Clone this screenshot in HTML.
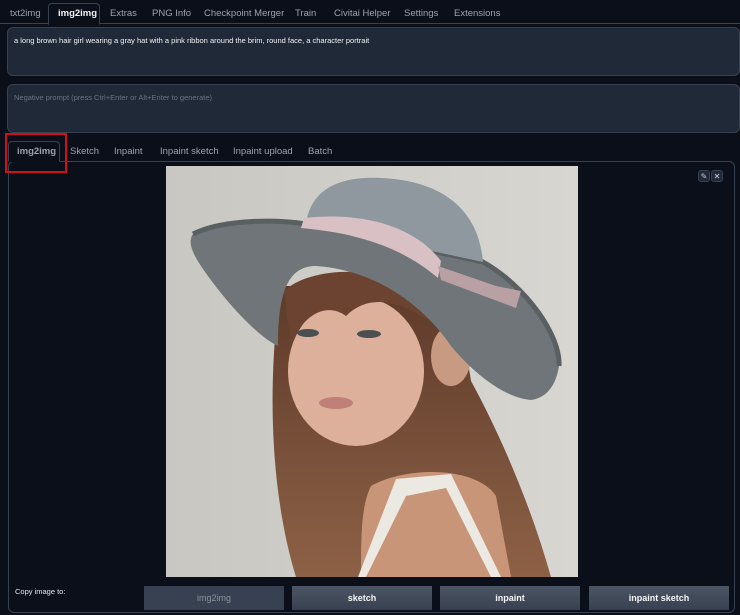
<!DOCTYPE html>
<html><head><style>
*{margin:0;padding:0;box-sizing:border-box}
body{width:740px;height:615px;background:#0b0f19;font-family:"Liberation Sans",sans-serif;position:relative;overflow:hidden;color:#e5e7eb}
.tabs{position:absolute;top:0;left:0;right:0;height:24px;border-bottom:1px solid #374151}
.tab{position:absolute;top:8px;font-size:9.5px;color:#9ca3af}
.act{color:#f3f4f6;font-weight:bold}
.ta{position:absolute;left:7px;right:0;background:#1f2937;border:1px solid #374151;border-radius:6px}
.sub{position:absolute;top:146px;font-size:9.5px;color:#9ca3af}
.btn{position:absolute;top:586px;height:24px;color:#f3f4f6;font-size:9px;font-weight:bold;text-align:center;line-height:24px;background:linear-gradient(#4b5563,#374151)}
</style></head><body>
<div class="tabs">
<div style="position:absolute;left:48px;top:3px;width:52px;height:22px;border:1px solid #374151;border-bottom:1px solid #0b0f19;border-radius:4px 4px 0 0;background:#0b0f19"></div>
<span class="tab" style="left:10px">txt2img</span>
<span class="tab act" style="left:58px">img2img</span>
<span class="tab" style="left:110px">Extras</span>
<span class="tab" style="left:152px">PNG Info</span>
<span class="tab" style="left:204px">Checkpoint Merger</span>
<span class="tab" style="left:295px">Train</span>
<span class="tab" style="left:334px">Civitai Helper</span>
<span class="tab" style="left:404px">Settings</span>
<span class="tab" style="left:454px">Extensions</span>
</div>
<div class="ta" style="top:27px;height:49px"><div style="padding:8px 0 0 6px;font-size:7.5px;color:#f3f4f6">a long brown hair girl wearing a gray hat with a pink ribbon around the brim, round face, a character portrait</div></div>
<div class="ta" style="top:84px;height:49px"><div style="padding:8px 0 0 6px;font-size:7.5px;color:#6b7280">Negative prompt (press Ctrl+Enter or Alt+Enter to generate)</div></div>
<div style="position:absolute;left:8px;top:161px;right:5px;height:452px;border:1px solid #374151;border-radius:6px"></div>
<div style="position:absolute;left:8px;top:141px;width:52px;height:21px;border:1px solid #374151;border-bottom:1px solid #0b0f19;border-radius:4px 4px 0 0;background:#0b0f19"></div>
<div style="position:absolute;left:5px;top:133px;width:62px;height:40px;border:2px solid #d0101a"></div>
<span class="sub act" style="left:17px">img2img</span>
<span class="sub" style="left:70px">Sketch</span>
<span class="sub" style="left:114px">Inpaint</span>
<span class="sub" style="left:160px">Inpaint sketch</span>
<span class="sub" style="left:233px">Inpaint upload</span>
<span class="sub" style="left:308px">Batch</span>
<div style="position:absolute;left:698px;top:170px;width:12px;height:12px;border:1px solid #374151;border-radius:3px;background:#1f2937;font-size:8px;text-align:center;line-height:11px;color:#ccc">✎</div>
<div style="position:absolute;left:711px;top:170px;width:12px;height:12px;border:1px solid #374151;border-radius:3px;background:#1f2937;font-size:8px;text-align:center;line-height:11px;color:#ddd">✕</div>
<svg style="position:absolute;left:166px;top:166px" width="412" height="411" viewBox="0 0 412 411">
<defs><linearGradient id="bg" x1="0" x2="1"><stop offset="0" stop-color="#c9c7c1"/><stop offset="1" stop-color="#d8d6d1"/></linearGradient>
<linearGradient id="hair" x1="0" x2="0" y1="0" y2="1"><stop offset="0" stop-color="#5e3a2a"/><stop offset="1" stop-color="#8d6146"/></linearGradient></defs>
<rect width="412" height="411" fill="url(#bg)"/>
<path d="M115,120 C100,220 105,330 130,411 L385,411 C365,340 335,270 305,215 L290,120 Z" fill="url(#hair)"/>
<path d="M205,320 C240,300 310,300 330,330 L345,411 L195,411 C195,370 195,340 205,320 Z" fill="#c99579"/>
<path d="M230,313 L285,308 L335,411 L325,411 L280,322 L240,330 L200,411 L192,411 Z" fill="#ece8e2"/>
<ellipse cx="190" cy="205" rx="68" ry="75" fill="#dcb09a"/>
<ellipse cx="285" cy="190" rx="20" ry="30" fill="#c89a82"/>
<path d="M118,125 C150,95 240,100 285,140 L270,160 C230,130 200,130 180,150 C160,135 135,150 125,180 Z" fill="#6b4330"/>
<ellipse cx="142" cy="167" rx="11" ry="4" fill="#4a4f52"/><ellipse cx="203" cy="168" rx="12" ry="4" fill="#4a4f52"/>
<ellipse cx="170" cy="237" rx="17" ry="6" fill="#c07f78"/>
<path d="M27,68 C60,52 115,54 140,58 L317,96 C360,120 395,170 393,200 C390,220 380,232 365,234 C340,232 310,210 285,180 C265,150 220,105 150,100 C125,100 112,120 112,180 C90,170 55,130 35,100 C25,85 22,75 27,68 Z" fill="#6f7579"/>
<path d="M27,68 C60,52 115,54 140,58 L317,96 C360,120 395,170 393,200" fill="none" stroke="#5a5f62" stroke-width="5"/>
<path d="M140,58 C145,22 175,10 215,12 C265,14 312,35 317,96 Z" fill="#8e989e"/>
<path d="M138,52 C200,45 250,62 275,95 L272,112 C240,85 200,68 135,62 Z" fill="#d8c0c4"/>
<path d="M272,100 L330,120 L355,125 L350,142 L275,114 Z" fill="#b8a0a5"/>
</svg>
<div style="position:absolute;left:15px;top:587px;font-size:7.5px;color:#e5e7eb">Copy image to:</div>
<div class="btn" style="left:144px;width:140px;color:#8b929c;background:#374151;font-weight:normal">img2img</div>
<div class="btn" style="left:292px;width:140px">sketch</div>
<div class="btn" style="left:440px;width:140px">inpaint</div>
<div class="btn" style="left:589px;width:140px">inpaint sketch</div>
</body></html>
